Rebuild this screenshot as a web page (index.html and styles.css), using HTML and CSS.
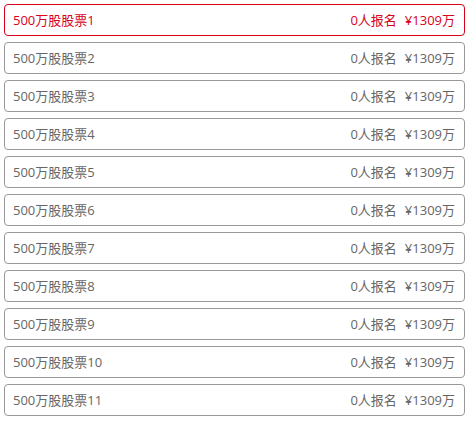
FILE: index.html
```html
<!DOCTYPE html>
<html lang="zh-CN">
<head>
    <meta charset="UTF-8">
    <title>股票列表</title>
    <link rel="stylesheet" href="styles.css">
</head>
<body>
    <ul class="list">
        <li class="item active"><span class="name">500万股股票1</span><span class="info"><span>0人报名</span><span class="price">¥1309万</span></span></li>
        <li class="item"><span class="name">500万股股票2</span><span class="info"><span>0人报名</span><span class="price">¥1309万</span></span></li>
        <li class="item"><span class="name">500万股股票3</span><span class="info"><span>0人报名</span><span class="price">¥1309万</span></span></li>
        <li class="item"><span class="name">500万股股票4</span><span class="info"><span>0人报名</span><span class="price">¥1309万</span></span></li>
        <li class="item"><span class="name">500万股股票5</span><span class="info"><span>0人报名</span><span class="price">¥1309万</span></span></li>
        <li class="item"><span class="name">500万股股票6</span><span class="info"><span>0人报名</span><span class="price">¥1309万</span></span></li>
        <li class="item"><span class="name">500万股股票7</span><span class="info"><span>0人报名</span><span class="price">¥1309万</span></span></li>
        <li class="item"><span class="name">500万股股票8</span><span class="info"><span>0人报名</span><span class="price">¥1309万</span></span></li>
        <li class="item"><span class="name">500万股股票9</span><span class="info"><span>0人报名</span><span class="price">¥1309万</span></span></li>
        <li class="item"><span class="name">500万股股票10</span><span class="info"><span>0人报名</span><span class="price">¥1309万</span></span></li>
        <li class="item"><span class="name">500万股股票11</span><span class="info"><span>0人报名</span><span class="price">¥1309万</span></span></li>
    </ul>
</body>
</html>
```

FILE: styles.css
```css
body {
    margin: 0;
    background-color: #fff;
    font-family: "Open Sans", "Noto Sans CJK SC", sans-serif;
    font-size: 13px;
    color: #666;
}
.list {
    list-style: none;
    margin: 0;
    padding: 4px 6px 4px 4px;
    display: flex;
    flex-direction: column;
    gap: 6px;
}
.item {
    box-sizing: border-box;
    display: flex;
    justify-content: space-between;
    align-items: center;
    height: 32px;
    padding: 0 9px 2px 8px;
    border: 1px solid #999;
    border-radius: 4px;
}
.item.active {
    border-color: #d9001b;
    color: #d9001b;
}
.price {
    margin-left: 8px;
}
```
